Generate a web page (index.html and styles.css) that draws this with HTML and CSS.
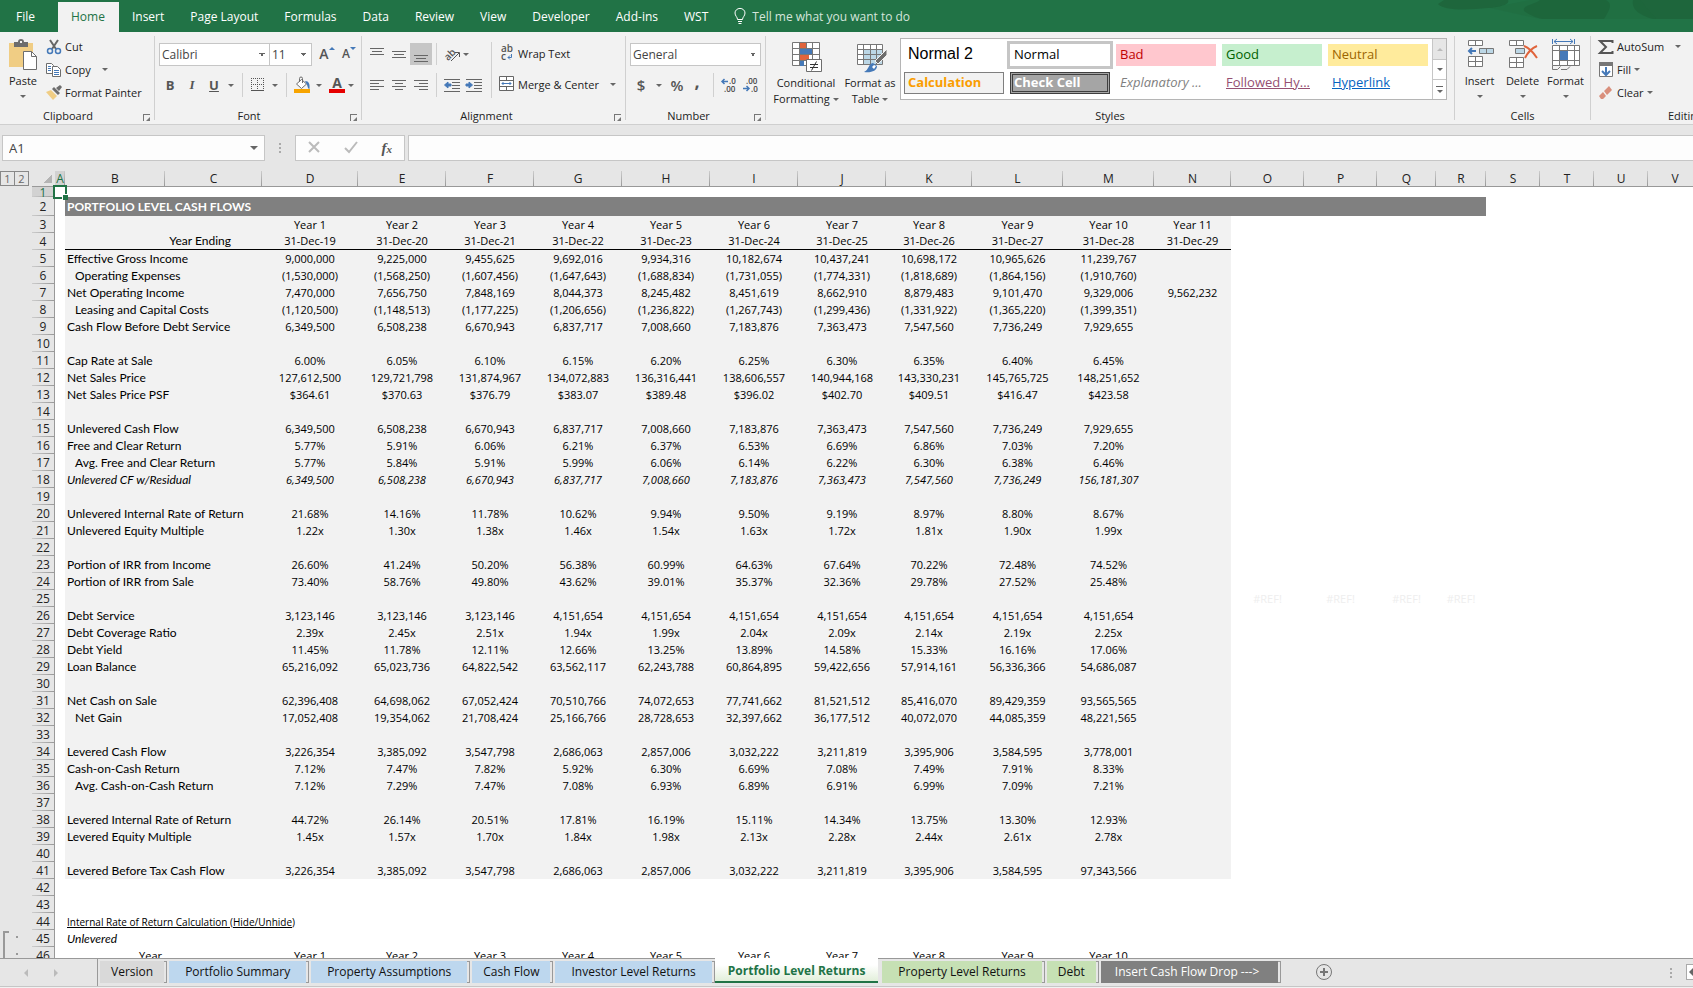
FILE: index.html
```html
<!DOCTYPE html>
<html lang="en">
<head>
    <meta charset="UTF-8">
    <meta name="viewport" content="width=device-width, initial-scale=1.0">
    <title>Portfolio Level Returns</title>
    <link rel="stylesheet" href="styles.css">
</head>
<body>

    <!-- Ribbon tabs -->
    <nav class="tabs">
        <button class="tab file">File</button>
        <button class="tab active">Home</button>
        <button class="tab">Insert</button>
        <button class="tab">Page Layout</button>
        <button class="tab">Formulas</button>
        <button class="tab">Data</button>
        <button class="tab">Review</button>
        <button class="tab">View</button>
        <button class="tab">Developer</button>
        <button class="tab">Add-ins</button>
        <button class="tab">WST</button>
        <button class="tab tell">
            <svg width="12" height="17" viewBox="0 0 12 17" fill="none" stroke="#fff"><path d="M3.5 11.5C3.5 9 1 8 1 5a5 4.6 0 0 1 10 0c0 3-2.500 4-2.500 6.500zM4 13.500h4M4.500 15.500h3"/></svg>
            Tell me what you want to do
        </button>
        <svg class="clouds" width="263" height="20" viewBox="0 0 263 20" fill="#1e663c"><path d="M8 4l6-4h64c2 4-6 7-20 8-20 2-44 3-50-4zM94 11c-2-6 10-6 16-11h66c8 4 2 12-2 19h-62c-8-2-12-4-18-8zM203 0h60v19h-40c-14-4-22-10-20-19z"/><path opacity=".3" d="M60 8l40-8h110l16 19H110z"/></svg>
    </nav>

    <!-- Ribbon -->
    <div class="ribbon">
        <section class="group clipboard">
            <div class="tools">
                <button class="big">
                    <svg width="30" height="32" viewBox="0 0 30 32"><path fill="#f0cd84" d="M1 4h24v24H1z"/><path fill="#6d6d6d" d="M6 3h4a3 3 0 0 1 6 0h4v5H6z"/><path fill="#f2f2f2" d="M12 2h2v2h-2z"/><path fill="#fff" stroke="#6d6d6d" d="M15.500 12.500h8l5 5v13h-13z"/><path fill="none" stroke="#6d6d6d" d="M23.500 12.500v5h5"/></svg>
                    Paste
                    <i class="arrow"></i>
                </button>
                <div class="stack">
                    <button class="small">
                        <svg width="16" height="16" viewBox="0 0 16 16" fill="none"><path stroke="#666" stroke-width="2" d="M4 1l6 9M12 1L6 10"/><circle cx="4" cy="12" r="2.500" stroke="#4579b8" stroke-width="1.500"/><circle cx="12" cy="12" r="2.500" stroke="#4579b8" stroke-width="1.500"/></svg>
                        Cut
                    </button>
                    <button class="small">
                        <svg width="16" height="16" viewBox="0 0 16 16" fill="#fff" stroke="#6d6d6d"><path d="M.5 1.500h5l2 2v8h-7z"/><path d="M6.500 4.500h5l3 3v7h-8z"/><path stroke="#4579b8" d="M2 4.500h3M2 6.500h3M2 8.500h3M8 8.500h5M8 10.500h5M8 12.500h5"/></svg>
                        Copy <i class="arrow wide"></i>
                    </button>
                    <button class="small">
                        <svg width="16" height="16" viewBox="0 0 16 16"><path fill="#f0cd84" d="M0 7l5-2 6 6-4 4z"/><path fill="#6d6d6d" d="M6 4l2-2 6 6-2 2zM10 3l4-3 2 2-3 4z"/></svg>
                        Format Painter
                    </button>
                </div>
            </div>
            <footer>Clipboard <i class="launcher"></i></footer>
        </section>

        <section class="group font">
            <div class="tools rows">
                <div class="row">
                    <select class="box face" aria-label="Font"><option>Calibri</option></select>
                    <select class="box size" aria-label="Font size"><option>11</option></select>
                    <button class="icon grow" title="Increase font size">A<svg width="6" height="4" viewBox="0 0 6 4" fill="#4579b8"><path d="M0 3l3-3 3 3z"/></svg></button>
                    <button class="icon shrink" title="Decrease font size">A<svg width="6" height="4" viewBox="0 0 6 4" fill="#4579b8"><path d="M0 0h6L3 3z"/></svg></button>
                </div>
                <div class="row second">
                    <button class="icon b">B</button>
                    <button class="icon i">I</button>
                    <button class="icon u">U</button>
                    <i class="arrow"></i>
                    <i class="sep"></i>
                    <button class="icon" title="Borders"><svg width="14" height="14" viewBox="0 0 14 14" stroke="#555" fill="none"><path stroke-dasharray="1 1" d="M0 .5h13M.5 0v13M12.500 0v13M6.500 0v13M0 6.500h13"/><path d="M0 12.500h13"/></svg></button>
                    <i class="arrow"></i>
                    <i class="sep"></i>
                    <button class="icon" title="Fill color"><svg width="17" height="16" viewBox="0 0 17 16"><path fill="#fff" stroke="#6d6d6d" d="M2.500 7l5-4.500 5 4.500-5 4.500z"/><path fill="none" stroke="#6d6d6d" d="M5.500 5V1.500a1.500 1.500 0 0 1 3 0V6"/><path fill="#4579b8" d="M11 4c4 0 5 3 4.500 8-2 0-1.500-3-3-5z"/><path fill="#f7a400" d="M0 12h16v4H0z"/></svg></button>
                    <i class="arrow"></i>
                    <button class="icon color" title="Font color">A</button>
                    <i class="arrow"></i>
                </div>
            </div>
            <footer>Font <i class="launcher"></i></footer>
        </section>

        <section class="group alignment">
            <div class="tools">
                <div class="rows">
                    <div class="row">
                        <button class="icon" title="Top align"><svg width="14" height="16" viewBox="0 0 14 16" stroke="#666"><path d="M0 2.500h14M2 5.500h10M0 8.500h14"/></svg></button>
                        <button class="icon" title="Middle align"><svg width="14" height="16" viewBox="0 0 14 16" stroke="#666"><path d="M0 5.500h14M2 8.500h10M0 11.500h14"/></svg></button>
                        <button class="icon on" title="Bottom align"><svg width="14" height="16" viewBox="0 0 14 16" stroke="#666"><path d="M0 9.500h14M2 12.500h10M0 15.500h14"/></svg></button>
                        <i class="sep"></i>
                        <button class="icon" title="Orientation"><svg width="17" height="16" viewBox="0 0 17 16"><text class="glyph tilted" x="0" y="12" transform="rotate(-45 6 9)">ab</text><path fill="none" stroke="#555" d="M7 15l8-8M11 6.500h4.500V11"/></svg></button>
                        <i class="arrow"></i>
                    </div>
                    <div class="row second">
                        <button class="icon" title="Align left"><svg width="14" height="12" viewBox="0 0 14 12" stroke="#666"><path d="M0 1.500h14M0 4.500h9M0 7.500h14M0 10.500h9"/></svg></button>
                        <button class="icon" title="Center"><svg width="14" height="12" viewBox="0 0 14 12" stroke="#666"><path d="M0 1.500h14M3 4.500h8M0 7.500h14M3 10.500h8"/></svg></button>
                        <button class="icon" title="Align right"><svg width="14" height="12" viewBox="0 0 14 12" stroke="#666"><path d="M0 1.500h14M5 4.500h9M0 7.500h14M5 10.500h9"/></svg></button>
                        <i class="sep"></i>
                        <button class="icon" title="Decrease indent"><svg width="16" height="14" viewBox="0 0 16 14" stroke="#666"><path d="M0 1.500h16M8 4.500h8M8 7.500h8M8 10.500h8M0 13.500h16"/><path fill="#4579b8" stroke="#4579b8" d="M.5 7L4 4v2h3v2H4v2z"/></svg></button>
                        <button class="icon" title="Increase indent"><svg width="16" height="14" viewBox="0 0 16 14" stroke="#666"><path d="M0 1.500h16M8 4.500h8M8 7.500h8M8 10.500h8M0 13.500h16"/><path fill="#4579b8" stroke="#4579b8" d="M6.500 7L3 4v2H0v2h3v2z"/></svg></button>
                    </div>
                </div>
                <i class="sep tall"></i>
                <div class="rows">
                    <div class="row">
                        <button class="small">
                            <svg width="16" height="16" viewBox="0 0 16 16"><text class="glyph" x="2" y="7">ab</text><text class="glyph" x="2" y="15">c</text><path fill="none" stroke="#4579b8" d="M12.500 9v3.500H9M11 10.500l-2 2 2 2"/></svg>
                            Wrap Text
                        </button>
                    </div>
                    <div class="row second">
                        <button class="small">
                            <svg width="16" height="16" viewBox="0 0 16 16" fill="#fff" stroke="#666"><path d="M.5.500h14v14H.500zM.5 4.500h14M.5 10.500h14M7.500.500v4M7.500 10.500v4"/><path stroke="#4579b8" d="M3 7.500h9M4.500 6L3 7.500 4.500 9M10.500 6L12 7.500 10.500 9"/></svg>
                            Merge &amp; Center <i class="arrow wide"></i>
                        </button>
                    </div>
                </div>
            </div>
            <footer>Alignment <i class="launcher"></i></footer>
        </section>

        <section class="group number">
            <div class="tools rows">
                <div class="row">
                    <select class="box format" aria-label="Number format"><option>General</option></select>
                </div>
                <div class="row second">
                    <button class="icon sign">$</button>
                    <i class="arrow"></i>
                    <button class="icon sign">%</button>
                    <button class="icon comma">,</button>
                    <i class="sep"></i>
                    <button class="icon" title="Increase decimal"><svg width="16" height="16" viewBox="0 0 16 16"><text class="digits" x="8" y="7">.0</text><text class="digits" x="3" y="15">.00</text><path fill="none" stroke="#4579b8" stroke-width="1.500" d="M7 4.500H1M3.500 2L1 4.500 3.500 7"/></svg></button>
                    <button class="icon" title="Decrease decimal"><svg width="16" height="16" viewBox="0 0 16 16"><text class="digits" x="3" y="7">.00</text><text class="digits" x="8" y="15">.0</text><path fill="none" stroke="#4579b8" stroke-width="1.500" d="M0 11.500h6M3.500 9L6 11.500 3.500 14"/></svg></button>
                </div>
            </div>
            <footer>Number <i class="launcher"></i></footer>
        </section>

        <section class="group styles">
            <div class="tools">
                <button class="big">
                    <svg width="30" height="32" viewBox="0 0 30 32"><path fill="#fff" stroke="#777" d="M.5 1.500h27v23H.500zM.5 7.500h27M.5 13.500h27M.5 19.500h27M7.500 1.500v23M20.500 1.500v23M14.500 1.500v23"/><path fill="#e0643c" d="M8 2h6v5H8zM8 14h9v5H8z"/><path fill="#4579b8" d="M8 8h12v5H8zM8 20h4v5H8z"/><path fill="#fff" stroke="#6d6d6d" d="M14.500 18.500h15v12h-15z"/><path fill="none" stroke="#333" d="M18 23.500h8M18 26.500h8M24.500 20.500l-5 9"/></svg>
                    Conditional<br>Formatting <i class="arrow"></i>
                </button>
                <button class="big table">
                    <svg width="30" height="32" viewBox="0 0 30 32"><path fill="#fff" d="M1 3h25v20H1z"/><path fill="#bcd7e6" d="M7 9h19v14H7z"/><path fill="none" stroke="#777" d="M.5 3.500h25v20H.500zM.5 8.500h25M.5 13.500h25M.5 18.500h25M6.500 3.500v20M13.500 3.500v20M19.500 3.500v20"/><path fill="#6d6d6d" stroke="#f2f2f2" d="M30 8v6L21 23l-3-3z"/><path fill="#4579b8" d="M7 31c5-2 4-8 9-9l4 3c0 5-6 7-13 6z"/><path fill="#fff" d="M15 26l2-2 2 1-2 3z"/></svg>
                    Format as<br>Table <i class="arrow"></i>
                </button>
                <div class="gallery">
                    <div class="swatches">
                        <button class="swatch normal2">Normal 2</button>
                        <button class="swatch normal">Normal</button>
                        <button class="swatch bad">Bad</button>
                        <button class="swatch good">Good</button>
                        <button class="swatch neutral">Neutral</button>
                        <button class="swatch calc">Calculation</button>
                        <button class="swatch check">Check Cell</button>
                        <button class="swatch expl">Explanatory ...</button>
                        <button class="swatch visited">Followed Hy...</button>
                        <button class="swatch link">Hyperlink</button>
                    </div>
                    <div class="scroller">
                        <button disabled title="Up"><i class="arrow up"></i></button>
                        <button title="Down"><i class="arrow"></i></button>
                        <button class="more" title="More"><i class="arrow"></i></button>
                    </div>
                </div>
            </div>
            <footer>Styles</footer>
        </section>

        <section class="group cells">
            <div class="tools">
                <button class="big">
                    <svg width="30" height="32" viewBox="0 0 30 32" fill="#fff" stroke="#777"><path d="M3.500 1.500h14v5h-14zM10.500 1.500v5M3.500 17.500h14v10h-14zM3.500 22.500h14M10.500 17.500v10"/><path fill="#bcd7e6" d="M14.500 9.500h14v5h-14zM21.500 9.500v5"/><path fill="none" stroke="#4579b8" stroke-width="2" d="M11 12H4M7 9l-3 3 3 3"/></svg>
                    Insert
                    <i class="arrow"></i>
                </button>
                <button class="big">
                    <svg width="30" height="32" viewBox="0 0 30 32" fill="#fff" stroke="#777"><path d="M1.500 1.500h14v5h-14zM8.500 1.500v5M1.500 18.500h14v10h-14zM1.500 23.500h14M8.500 18.500v10"/><path fill="#bcd7e6" d="M7.500 9.500h9v5h-9z"/><path fill="none" stroke="#e0643c" stroke-width="2" d="M16 7c5 2 9 6 13 12M29 7c-5 2-9 6-12 12"/></svg>
                    Delete
                    <i class="arrow"></i>
                </button>
                <button class="big">
                    <svg width="30" height="32" viewBox="0 0 30 32" fill="#fff" stroke="#777"><path d="M1.500 6.500h27v20h-27zM1.500 11.500h27M1.500 21.500h27M8.500 6.500v20M16.500 6.500v20M23.500 6.500v20"/><path fill="#4579b8" stroke="none" d="M9 12h8v9H9z"/><path fill="none" d="M1.500 26.500v4h5l3-3M10 30.500h6l3-3"/><path fill="none" stroke="#4579b8" d="M1.500 0v5M23.500 0v5M3 2.500h19M6 0L3 2.500 6 5M19 0l3 2.500L19 5"/></svg>
                    Format
                    <i class="arrow"></i>
                </button>
            </div>
            <footer>Cells</footer>
        </section>

        <section class="group editing">
            <div class="tools">
                <div class="stack">
                    <button class="small">
                        <svg width="16" height="16" viewBox="0 0 16 16" fill="none" stroke="#555" stroke-width="2"><path d="M14.500 4V2H2l6 6-6 6h12.500v-2"/></svg>
                        AutoSum <i class="arrow wide"></i>
                    </button>
                    <button class="small">
                        <svg width="16" height="16" viewBox="0 0 16 16"><path fill="#fff" stroke="#777" d="M1.500.500h13v14h-13z"/><path fill="#777" d="M1 0h14v4H1z"/><path fill="none" stroke="#4579b8" stroke-width="2" d="M8 5v8M4 9l4 4 4-4"/></svg>
                        Fill <i class="arrow"></i>
                    </button>
                    <button class="small">
                        <svg width="16" height="16" viewBox="0 0 16 16"><path fill="#d98f7c" d="M6 6l5-5 3 4-5 5zM1 11l4-4 3 4-3 3H3z"/></svg>
                        Clear <i class="arrow"></i>
                    </button>
                </div>
                <button class="big sort">Sort &amp;<br>Filter</button>
            </div>
            <footer>Editing</footer>
        </section>
    </div>

    <!-- Formula bar -->
    <div class="formula-bar">
        <div class="name-box">
            <input type="text" value="A1" aria-label="Name box">
            <i class="arrow large"></i>
        </div>
        <i class="dots"></i>
        <div class="fx">
            <button title="Cancel"><svg width="12" height="12" viewBox="0 0 12 12" stroke="#bbb" stroke-width="2"><path d="M1 1l10 10M11 1L1 11"/></svg></button>
            <button title="Enter"><svg width="14" height="12" viewBox="0 0 14 12" fill="none" stroke="#bbb" stroke-width="2"><path d="M1 7l4 4 8-10"/></svg></button>
            <button title="Insert function"><em>f<small>x</small></em></button>
        </div>
        <input class="formula" type="text" aria-label="Formula">
    </div>

    <!-- Worksheet -->
    <main class="sheet">
        <aside class="outline">
            <div class="levels">
                <button>1</button>
                <button>2</button>
            </div>
            <div class="bracket"><i></i><i></i></div>
        </aside>
        <table class="grid">
            <colgroup id="cols"></colgroup>
            <thead><tr id="letters"></tr></thead>
            <tbody id="rows"></tbody>
        </table>
    </main>

    <!-- Sheet tabs -->
    <footer class="sheet-tabs">
        <div class="scroll"><i class="left"></i><i class="right"></i></div>
        <button class="gray">Version</button>
        <button class="blue long">Portfolio Summary</button>
        <button class="blue long">Property Assumptions</button>
        <button class="blue">Cash Flow</button>
        <button class="blue long">Investor Level Returns</button>
        <button class="current">Portfolio Level Returns</button>
        <button class="green long">Property Level Returns</button>
        <button class="green">Debt</button>
        <button class="dark">Insert Cash Flow Drop ---&gt;</button>
        <button class="add" title="New sheet"><svg width="16" height="16" viewBox="0 0 16 16" fill="none" stroke="#777"><circle cx="8" cy="8" r="7.500"/><path stroke-width="2" d="M8 4v8M4 8h8"/></svg></button>
        <i class="dots"></i>
        <button class="hscroll" title="Scroll left"><i></i></button>
    </footer>
    <div class="status"></div>

    <script src="script.js"></script>
</body>
</html>
```
FILE: styles.css
```css
* {
    box-sizing: border-box;
}

body {
    display: flex;
    flex-direction: column;
    height: 100vh;
    margin: 0;
    overflow: hidden;
    background-color: #e6e6e6;
    color: #222;
    font-family: "Open Sans", "Noto Sans", sans-serif;
    font-size: 11px;
}

button, input, select {
    margin: 0;
    padding: 0;
    border: 0;
    border-radius: 0;
    background: none;
    color: inherit;
    font: inherit;
}

svg {
    flex: none;
    overflow: visible;
}

/* Ribbon tabs */
.tabs {
    position: relative;
    display: flex;
    flex: none;
    height: 32px;
    padding-top: 2px;
    background-color: #217346;
}

.tab {
    padding: 0 13px 2px;
    color: #fff;
    font-size: 12px;
    white-space: nowrap;
}

.tab.file {
    padding-right: 23px;
    padding-left: 16px;
}

.tab.active {
    padding-right: 14px;
    background-color: #f2f2f2;
    color: #217346;
}

.tab.tell {
    display: flex;
    align-items: center;
    gap: 6px;
    color: #d5e5dc;
}

.clouds {
    position: absolute;
    top: 0;
    right: 0;
}

/* Ribbon */
.ribbon {
    display: flex;
    flex: none;
    height: 93px;
    padding-top: 4px;
    border-bottom: 1px solid #cfcfcf;
    overflow: hidden;
    background-color: #f2f2f2;
}

.group {
    display: flex;
    flex: none;
    flex-direction: column;
    height: 84px;
    border-right: 1px solid #d0d0d0;
}

.group footer {
    position: relative;
    line-height: 16px;
    text-align: center;
}

.clipboard { width: 155px; }
.font { width: 207px; }
.alignment { width: 264px; }
.number { width: 140px; }
.styles { width: 689px; }
.cells { width: 136px; }
.editing { width: 190px; }

.clipboard footer,
.font footer {
    padding-right: 18px;
}

.alignment footer,
.number footer {
    padding-right: 14px;
}

.tools {
    display: flex;
    flex: none;
    height: 72px;
}

.rows {
    display: flex;
    flex-direction: column;
    gap: 8px;
    padding-top: 7px;
}

.row {
    display: flex;
    align-items: center;
    height: 22px;
}

.row.second {
    height: 24px;
}

.stack {
    display: flex;
    flex-direction: column;
}

.small {
    display: flex;
    align-items: center;
    gap: 3px;
    height: 23px;
    padding-bottom: 2px;
    white-space: nowrap;
}

.big {
    display: flex;
    flex-direction: column;
    align-items: center;
    padding-top: 3px;
    line-height: 16px;
}

.big svg {
    margin-bottom: 2px;
}

.clipboard .big {
    width: 46px;
}

.arrow {
    display: inline-block;
    flex: none;
    border: 3px solid transparent;
    border-top-color: #666;
    border-bottom: 0;
    vertical-align: middle;
}

.arrow.wide {
    margin-left: 8px;
}

.arrow.large {
    border-width: 4px;
    border-bottom: 0;
}

.arrow.up {
    border-top: 0;
    border-bottom: 3px solid #bbb;
}

.big > .arrow {
    margin-top: 6px;
}

.launcher {
    position: absolute;
    top: 6px;
    right: 4px;
    width: 7px;
    height: 7px;
    border-top: 1px solid #777;
    border-left: 1px solid #777;
}

.launcher::after {
    position: absolute;
    right: 0;
    bottom: 0;
    border: 2px solid #777;
    border-top-color: transparent;
    border-left-color: transparent;
    content: "";
}

.sep {
    flex: none;
    align-self: stretch;
    width: 1px;
    background-color: #d0d0d0;
}

.sep.tall {
    align-self: flex-start;
    height: 56px;
    margin: 6px 7px 0 6px;
}

.icon {
    display: flex;
    align-items: center;
    justify-content: center;
    flex: none;
    width: 22px;
    height: 22px;
    color: #555;
}

.icon.on {
    background-color: #c6c6c6;
}

/* Font */
.font .rows,
.font .tools {
    padding-left: 4px;
}

.box {
    height: 23px;
    padding: 0 2px;
    border: 1px solid #c6c6c6;
    appearance: none;
    background-color: #fff;
    background-image: linear-gradient(45deg, transparent 50%, #666 50%), linear-gradient(-45deg, transparent 50%, #666 50%);
    background-position: right 7px center, right 4px center;
    background-repeat: no-repeat;
    background-size: 3px 3px;
    color: #444;
    font-size: 12px;
}

.face { width: 111px; }
.size { width: 43px; margin-left: -1px; }
.format { width: 131px; }

.font .second .arrow {
    margin: 0 3px;
}

.font .second .sep {
    margin: 0 4px 0 5px;
}

.grow, .shrink {
    align-items: flex-start;
    font-weight: 600;
    font-size: 14px;
    line-height: 22px;
}

.grow { margin-left: 4px; }

.shrink {
    font-size: 12px;
}

.grow svg, .shrink svg {
    margin-top: 4px;
}

.b, .i, .u {
    font-weight: 700;
    font-size: 13px;
}

.i { font-family: "Liberation Serif", serif; font-style: italic; }
.u { text-decoration: underline; }

.color {
    width: 16px;
    height: 16px;
    margin-left: 4px;
    border-bottom: 4px solid #e60000;
    font-weight: 700;
    font-size: 14px;
    line-height: 12px;
}

/* Alignment */
.alignment .rows:first-child {
    padding-left: 4px;
}

.alignment .row .sep {
    margin: 0 4px;
}

.glyph {
    fill: #555;
    font-weight: 600;
    font-size: 10px;
}

.digits {
    fill: #444;
    font-weight: 600;
    font-size: 8px;
}

/* Number */
.number .tools {
    padding-left: 4px;
}

.sign {
    font-weight: 600;
    font-size: 15px;
}

.comma {
    width: 18px;
    padding-bottom: 8px;
    font-weight: 700;
    font-size: 18px;
}

.number .arrow {
    margin: 0 4px;
}

.number .sep {
    margin: 0 4px 0 7px;
}

/* Styles gallery */
.styles .tools {
    gap: 4px;
    padding-left: 6px;
}

.styles .big {
    display: block;
    width: 68px;
    text-align: center;
    white-space: nowrap;
}

.styles .big svg {
    display: block;
    margin: 0 auto 2px 20px;
}

.styles .big.table {
    width: 52px;
}

.styles .big.table svg {
    margin-left: 13px;
}

.styles .big .arrow {
    margin: 0;
}

.styles .gallery {
    display: flex;
    height: 62px;
    margin-top: 2px;
    border: 1px solid #b5b5b5;
    background-color: #fff;
}

.swatches {
    display: grid;
    grid-template-columns: repeat(5, 100px);
    grid-auto-rows: 22px;
    gap: 6px;
    padding: 5px 4px 5px 3px;
}

.swatch {
    padding: 0 4px 2px;
    overflow: hidden;
    color: #000;
    font-size: 13px;
    line-height: 18px;
    text-align: left;
    white-space: nowrap;
}

.normal2 { font-family: "Liberation Sans", sans-serif; font-size: 16px; }
.normal { outline: 3px solid #c6c6c6; }
.bad { background-color: #ffc7ce; color: #c00000; }
.good { background-color: #c6efce; color: #006100; }
.neutral { background-color: #ffeb9c; color: #9c6500; }
.calc { padding: 0 3px 2px; border: 1px solid #7f7f7f; background-color: #f2f2f2; color: #fa9d00; font-weight: 700; }
.check { padding: 0 1px 2px; border: 3px double #3f3f3f; background-color: #a5a5a5; color: #fff; font-weight: 700; line-height: 14px; }
.expl { color: #7f7f7f; font-style: italic; }
.visited { color: #954f72; text-decoration: underline; }
.link { color: #0563c1; text-decoration: underline; }

.scroller {
    display: grid;
    grid-template-rows: repeat(3, 1fr);
    width: 14px;
    border-left: 1px solid #c6c6c6;
}

.scroller button {
    display: flex;
    flex-direction: column;
    align-items: center;
    justify-content: center;
}

.scroller button + button {
    border-top: 1px solid #c6c6c6;
}

.scroller button:disabled {
    background-color: #e6e6e6;
}

.more::before {
    width: 7px;
    height: 1px;
    margin-bottom: 3px;
    background-color: #666;
    content: "";
}

/* Cells and editing */
.cells .tools {
    padding-left: 3px;
}

.cells .big {
    width: 43px;
}

.editing .tools {
    gap: 16px;
    padding-left: 7px;
}

.editing .small .arrow {
    margin-left: 0;
}

.editing .small .arrow.wide {
    margin-left: 8px;
}

.sort {
    display: block;
    padding-top: 37px;
    text-align: left;
}

/* Formula bar */
.formula-bar {
    display: flex;
    flex: none;
    height: 46px;
    padding: 10px 0 10px 2px;
}

.name-box,
.fx,
.formula {
    height: 26px;
    border: 1px solid #c6c6c6;
    background-color: #fdfdfd;
}

.name-box {
    display: flex;
    align-items: center;
    width: 263px;
    padding: 0 6px;
}

.name-box input {
    flex: 1;
    min-width: 0;
    color: #444;
    font-size: 13px;
}

.dots {
    align-self: center;
    width: 2px;
    height: 10px;
    margin: 0 14px;
    background-image: repeating-linear-gradient(#aaa 0 2px, transparent 2px 4px);
}

.fx {
    display: flex;
    align-items: center;
    justify-content: space-around;
    width: 110px;
    margin-right: 3px;
}

.fx em {
    color: #555;
    font-family: "Liberation Serif", serif;
    font-weight: 700;
    font-size: 15px;
}

.fx small {
    font-size: 11px;
}

.formula {
    flex: 1;
    border-right: 0;
}

/* Worksheet */
.sheet {
    display: flex;
    flex: 1;
    min-height: 0;
    overflow: hidden;
    background-color: #fff;
}

.outline {
    display: flex;
    flex: none;
    flex-direction: column;
    justify-content: space-between;
    width: 32px;
    background-color: #e6e6e6;
}

.levels {
    display: flex;
}

.levels button {
    width: 15px;
    height: 15px;
    margin-right: -1px;
    border: 1px solid #888;
    color: #666;
    line-height: 12px;
}

.bracket {
    display: flex;
    flex-direction: column;
    align-items: center;
    gap: 15px;
    width: 28px;
    height: 27px;
    margin-left: 3px;
    padding-top: 5px;
    background: linear-gradient(#999, #999) no-repeat 0 0 / 2px 100%, linear-gradient(#999, #999) no-repeat 0 0 / 6px 2px;
}

.bracket i {
    flex: none;
    width: 2px;
    height: 2px;
    background-color: #999;
}

.grid {
    flex: none;
    align-self: flex-start;
    width: 1px;
    border-collapse: separate;
    border-spacing: 0;
    table-layout: fixed;
    color: #000;
}

.grid tbody tr {
    height: 17px;
}

.grid th,
.grid td {
    height: 17px;
    padding: 0;
    line-height: 16px;
    text-align: center;
    white-space: nowrap;
}

.grid th {
    border-bottom: 1px solid #999;
    background-color: #e6e6e6;
    color: #222;
    font-weight: 400;
    font-size: 12px;
}

.grid thead th {
    height: 16px;
    background: linear-gradient(#ccc, #999) no-repeat right / 1px 100% #e6e6e6;
    line-height: 15px;
}

.grid thead th.corner {
    background: linear-gradient(135deg, transparent 50%, #b4b4b4 50%) no-repeat 12px 4px / 8px 8px #e6e6e6;
}

.grid tbody th {
    border-right: 1px solid #999;
    border-bottom: 0;
    background: linear-gradient(90deg, #ccc, #999) no-repeat bottom / 100% 1px #e6e6e6;
}

.grid thead th.picked,
.grid tbody th.picked {
    background-color: #d2d2d2;
    color: #217346;
}

.grid .first,
.grid .first th,
.grid .first td {
    height: 10px;
    line-height: 9px;
}

.grid .first .cursor {
    position: relative;
    outline: 2px solid #217346;
}

.cursor::after {
    position: absolute;
    right: -3px;
    bottom: -3px;
    width: 5px;
    height: 5px;
    border: solid #fff;
    border-width: 1px 0 0 1px;
    background-color: #217346;
    content: "";
}

.grid .title,
.grid .title th,
.grid .title td {
    height: 19px;
    line-height: 18px;
}

.grid .title .band {
    padding-left: 2px;
    background-color: #808080;
    color: #fff;
    font-family: Lato, sans-serif;
    font-weight: 700;
    font-size: 12px;
    text-align: left;
}

.grid .shade {
    background-color: #f2f2f2;
}

.grid .ruled .shade {
    border-bottom: 1px solid #000;
}

.grid .label {
    padding-left: 2px;
    font-family: Lato, sans-serif;
    font-size: 12px;
    text-align: left;
}

.grid .indent {
    padding-left: 10px;
}

.grid .ending {
    padding-right: 31px;
    font-family: Lato, sans-serif;
    font-size: 12px;
    text-align: right;
}

.grid .right {
    padding-right: 3px;
    text-align: right;
}

.grid .italic td {
    font-style: italic;
}

.grid .link-row td {
    font-family: inherit;
    font-size: 10px;
    text-decoration: underline;
}

.grid .ghost {
    color: #eee;
}

/* Sheet tabs */
.sheet-tabs {
    display: flex;
    flex: none;
    height: 28px;
    border-top: 1px solid #999;
    font-size: 12px;
}

.sheet-tabs button {
    position: relative;
    height: 22px;
    margin: 2px 3px 0 2px;
    padding: 0 11px;
    color: #111;
    line-height: 20px;
    white-space: nowrap;
}

.sheet-tabs .long {
    padding: 0 16px;
}

.gray, .blue, .green, .dark {
    box-shadow: 3px 0 0 -1px #e6e6e6, 3px 0 0 0 #999;
}

.scroll {
    display: flex;
    align-items: center;
    gap: 26px;
    width: 98px;
    padding-left: 24px;
    border-right: 1px solid #999;
}

.scroll i {
    border: 4px solid transparent;
}

.scroll .left { border-left: 0; border-right-color: #bbb; }
.scroll .right { border-right: 0; border-left-color: #bbb; }

.sheet-tabs .gray { background-color: #d9d9d9; }
.sheet-tabs .blue { background-color: #bdd7ee; }
.sheet-tabs .green { background-color: #c6e0b4; }
.sheet-tabs .dark { padding: 0 19px 0 14px; background-color: #808080; color: #fff; }

.sheet-tabs .current {
    height: 25px;
    margin: -1px 2px 0 0;
    padding: 2px 13px 0;
    border-bottom: 2px solid #217346;
    background: linear-gradient(#fff 30%, #e2efda);
    color: #217346;
    font-weight: 700;
}

.sheet-tabs .add {
    display: flex;
    align-items: center;
    margin-left: 24px;
}

.sheet-tabs .dots {
    margin-left: auto;
}

.sheet-tabs .hscroll {
    display: flex;
    align-items: center;
    width: 7px;
    height: 16px;
    margin: 5px 0 0;
    padding: 0 0 0 2px;
    border: 1px solid #aaa;
    border-right: 0;
    background-color: #fff;
}

.hscroll i {
    border: 4px solid transparent;
    border-left: 0;
    border-right-color: #666;
}

.status {
    flex: none;
    height: 2px;
    border-top: 1px solid #c6c6c6;
    background-color: #f2f2f2;
}
```
FILE: script.js
```js
// first entry is the row header, then columns A to V
var widths = [23, 10, 100, 97, 96, 88, 88, 88, 88, 88, 88, 86, 91, 91, 77, 73, 73, 59, 50, 54, 54, 54, 54];
var letters = 'ABCDEFGHIJKLMNOPQRSTUV';

// row number: [label, values separated by spaces]
var data = {
    3: ['', 'Year_1 Year_2 Year_3 Year_4 Year_5 Year_6 Year_7 Year_8 Year_9 Year_10 Year_11'],
    4: ['Year Ending', '31-Dec-19 31-Dec-20 31-Dec-21 31-Dec-22 31-Dec-23 31-Dec-24 31-Dec-25 31-Dec-26 31-Dec-27 31-Dec-28 31-Dec-29'],
    5: ['Effective Gross Income', '9,000,000 9,225,000 9,455,625 9,692,016 9,934,316 10,182,674 10,437,241 10,698,172 10,965,626 11,239,767'],
    6: ['>Operating Expenses', '(1,530,000) (1,568,250) (1,607,456) (1,647,643) (1,688,834) (1,731,055) (1,774,331) (1,818,689) (1,864,156) (1,910,760)'],
    7: ['Net Operating Income', '7,470,000 7,656,750 7,848,169 8,044,373 8,245,482 8,451,619 8,662,910 8,879,483 9,101,470 9,329,006 9,562,232'],
    8: ['>Leasing and Capital Costs', '(1,120,500) (1,148,513) (1,177,225) (1,206,656) (1,236,822) (1,267,743) (1,299,436) (1,331,922) (1,365,220) (1,399,351)'],
    9: ['Cash Flow Before Debt Service', '6,349,500 6,508,238 6,670,943 6,837,717 7,008,660 7,183,876 7,363,473 7,547,560 7,736,249 7,929,655'],
    11: ['Cap Rate at Sale', '6.00% 6.05% 6.10% 6.15% 6.20% 6.25% 6.30% 6.35% 6.40% 6.45%'],
    12: ['Net Sales Price', '127,612,500 129,721,798 131,874,967 134,072,883 136,316,441 138,606,557 140,944,168 143,330,231 145,765,725 148,251,652'],
    13: ['Net Sales Price PSF', '$364.61 $370.63 $376.79 $383.07 $389.48 $396.02 $402.70 $409.51 $416.47 $423.58'],
    15: ['Unlevered Cash Flow', '6,349,500 6,508,238 6,670,943 6,837,717 7,008,660 7,183,876 7,363,473 7,547,560 7,736,249 7,929,655'],
    16: ['Free and Clear Return', '5.77% 5.91% 6.06% 6.21% 6.37% 6.53% 6.69% 6.86% 7.03% 7.20%'],
    17: ['>Avg. Free and Clear Return', '5.77% 5.84% 5.91% 5.99% 6.06% 6.14% 6.22% 6.30% 6.38% 6.46%'],
    18: ['Unlevered CF w/Residual', '6,349,500 6,508,238 6,670,943 6,837,717 7,008,660 7,183,876 7,363,473 7,547,560 7,736,249 156,181,307'],
    20: ['Unlevered Internal Rate of Return', '21.68% 14.16% 11.78% 10.62% 9.94% 9.50% 9.19% 8.97% 8.80% 8.67%'],
    21: ['Unlevered Equity Multiple', '1.22x 1.30x 1.38x 1.46x 1.54x 1.63x 1.72x 1.81x 1.90x 1.99x'],
    23: ['Portion of IRR from Income', '26.60% 41.24% 50.20% 56.38% 60.99% 64.63% 67.64% 70.22% 72.48% 74.52%'],
    24: ['Portion of IRR from Sale', '73.40% 58.76% 49.80% 43.62% 39.01% 35.37% 32.36% 29.78% 27.52% 25.48%'],
    26: ['Debt Service', '3,123,146 3,123,146 3,123,146 4,151,654 4,151,654 4,151,654 4,151,654 4,151,654 4,151,654 4,151,654'],
    27: ['Debt Coverage Ratio', '2.39x 2.45x 2.51x 1.94x 1.99x 2.04x 2.09x 2.14x 2.19x 2.25x'],
    28: ['Debt Yield', '11.45% 11.78% 12.11% 12.66% 13.25% 13.89% 14.58% 15.33% 16.16% 17.06%'],
    29: ['Loan Balance', '65,216,092 65,023,736 64,822,542 63,562,117 62,243,788 60,864,895 59,422,656 57,914,161 56,336,366 54,686,087'],
    31: ['Net Cash on Sale', '62,396,408 64,698,062 67,052,424 70,510,766 74,072,653 77,741,662 81,521,512 85,416,070 89,429,359 93,565,565'],
    32: ['>Net Gain', '17,052,408 19,354,062 21,708,424 25,166,766 28,728,653 32,397,662 36,177,512 40,072,070 44,085,359 48,221,565'],
    34: ['Levered Cash Flow', '3,226,354 3,385,092 3,547,798 2,686,063 2,857,006 3,032,222 3,211,819 3,395,906 3,584,595 3,778,001'],
    35: ['Cash-on-Cash Return', '7.12% 7.47% 7.82% 5.92% 6.30% 6.69% 7.08% 7.49% 7.91% 8.33%'],
    36: ['>Avg. Cash-on-Cash Return', '7.12% 7.29% 7.47% 7.08% 6.93% 6.89% 6.91% 6.99% 7.09% 7.21%'],
    38: ['Levered Internal Rate of Return', '44.72% 26.14% 20.51% 17.81% 16.19% 15.11% 14.34% 13.75% 13.30% 12.93%'],
    39: ['Levered Equity Multiple', '1.45x 1.57x 1.70x 1.84x 1.98x 2.13x 2.28x 2.44x 2.61x 2.78x'],
    41: ['Levered Before Tax Cash Flow', '3,226,354 3,385,092 3,547,798 2,686,063 2,857,006 3,032,222 3,211,819 3,395,906 3,584,595 97,343,566'],
    44: ['Internal Rate of Return Calculation (Hide/Unhide)', ''],
    45: ['Unlevered', ''],
    46: ['', 'Year_1 Year_2 Year_3 Year_4 Year_5 Year_6 Year_7 Year_8 Year_9 Year_10']
};

var rowClass = { 1: 'first', 2: 'title', 4: 'ruled', 18: 'italic', 44: 'link-row', 45: 'italic' };

function cell(row, text, cls, span) {
    var td = row.insertCell();
    td.textContent = text;
    if (cls) td.className = cls;
    if (span) td.colSpan = span;
    return td;
}

function heading(row, text, cls) {
    var th = document.createElement('th');
    th.textContent = text;
    if (cls) th.className = cls;
    row.appendChild(th);
}

widths.forEach(function(w) {
    var col = document.createElement('col');
    col.style.width = w + 'px';
    document.getElementById('cols').appendChild(col);
});

var head = document.getElementById('letters');
heading(head, '', 'corner');
letters.split('').forEach(function(l) {
    heading(head, l, l == 'A' ? 'picked' : '');
});

var body = document.getElementById('rows');
for (var n = 1; n <= 46; n++) {
    var row = body.insertRow();
    row.className = rowClass[n] || '';
    heading(row, n, n == 1 ? 'picked' : '');
    cell(row, '', n == 1 ? 'cursor' : '');

    if (n == 1) {
        continue;
    }
    if (n == 2) {
        cell(row, 'PORTFOLIO LEVEL CASH FLOWS', 'band', 17);
        continue;
    }

    var label = data[n] ? data[n][0] : '';
    var values = data[n] && data[n][1] ? data[n][1].split(' ') : [];
    var shade = n <= 41 ? 'shade ' : '';

    if (n == 46) {
        cell(row, 'Year', 'right');
        cell(row, '');
    } else {
        var kind = n == 4 ? 'ending' : label[0] == '>' ? 'label indent' : 'label';
        cell(row, label.replace('>', ''), shade + kind, 2);
    }
    for (var i = 0; i < 11; i++) {
        cell(row, (values[i] || '').replace('_', ' '), shade);
    }
    if (n == 25) {
        for (var j = 0; j < 4; j++) {
            cell(row, '#REF!', 'ghost');
        }
    }
}
```
